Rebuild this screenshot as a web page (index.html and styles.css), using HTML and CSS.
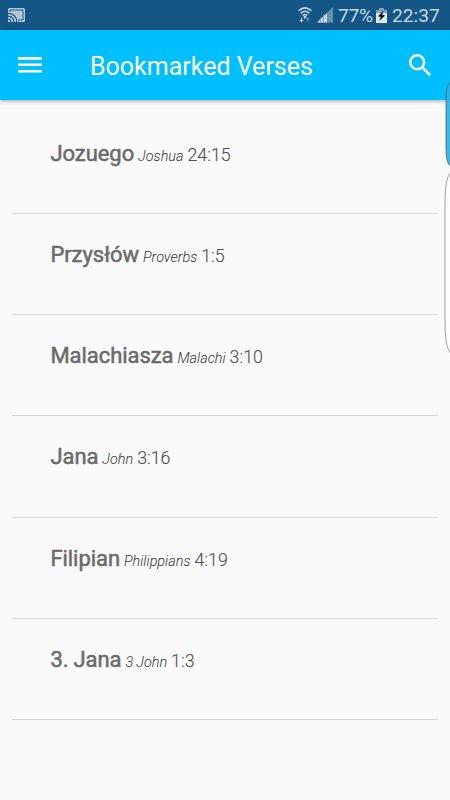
FILE: index.html
```html
<!DOCTYPE html>
<html lang="en">
<head>
<meta charset="utf-8">
<title>Bookmarked Verses</title>
<link rel="stylesheet" href="styles.css">
</head>
<body>
<div class="status">
  <svg class="cast" width="17" height="15" viewBox="0 0 17 15"><path d="M1.5 0h14Q17 0 17 1.5v11Q17 14 15.5 14H0V1.5Q0 0 1.5 0Z" fill="#b4c8d8"/><path d="M2 4V2h13v10h-5" fill="none" stroke="#175887" stroke-width="1"/><path d="M0 5.3Q8.5 5.6 8.8 14M0 8.2Q5.6 8.5 6 14M0 11Q2.7 11.2 3 14" fill="none" stroke="#175887" stroke-width="1.2"/></svg>
  <div class="status-right">
    <svg class="wifi" width="14" height="16" viewBox="0 0 14 16"><g fill="none" stroke="#c5d6e3" stroke-width="1.5"><path d="M.5 3.7Q7-2 13.5 3.7M2.6 6.2Q7 2.2 11.4 6.2M4.7 8.5Q7 6.5 9.3 8.5"/></g><path d="M7 8.5l1.8 1.5L7 12l-1.8-2Z" fill="#c5d6e3"/><path d="M4 10.500v2.500h1.500L3.500 15.500 1.500 13H3v-2.500Z" fill="#c5d6e3"/><path d="M9.500 15v-2.500H8l2-2.300 2 2.300h-1.500V15Z" fill="#6490b0"/></svg>
    <svg class="signal" width="16" height="16" viewBox="0 0 16 16"><path d="M0 15.500L16 0v15.500Z" fill="#6490b0"/><path d="M0 15.500L10 6v9.500Z" fill="#c5d6e3"/><path d="M3.500 10v6M6.500 7v9" stroke="#6490b0" stroke-width=".6"/></svg>
    <span class="percent">77%</span>
    <svg class="battery" width="11" height="15" viewBox="0 0 11 15"><path d="M3.500 0h4v2H11v13H0V2h3.500Z" fill="#dce7ee"/><path d="M0 2h3.500V0h4v2H11v3H0Z" fill="#7fa0b8"/><path d="M7.700 2.500L2 8.200l2.700.8-1.400 4L9 7.500 6.200 6.700Z" fill="#08111a"/></svg>
    <span class="clock">22:37</span>
  </div>
</div>
<header class="bar">
  <svg class="menu" width="24" height="16" viewBox="0 0 24 16"><path d="M0 1.400h24M0 7.700h24M0 14.200h24" stroke="#fff" stroke-width="2.600"/></svg>
  <h1>Bookmarked Verses</h1>
  <svg class="search" width="22" height="22" viewBox="3 3 17.490 17.490"><path fill="#fff" d="M15.500 14h-.790l-.280-.270A6.471 6.471 0 0 0 16 9.500 6.500 6.500 0 1 0 9.500 16c1.610 0 3.090-.590 4.230-1.570l.270.280v.790l5 4.990L20.490 19l-4.990-5zm-6 0C7.010 14 5 11.990 5 9.500S7.010 5 9.500 5 14 7.010 14 9.500 11.990 14 9.500 14z"/></svg>
</header>
<main class="list">
  <div class="row"><b>Jozuego</b> <i>Joshua</i> <span>24:15</span></div>
  <div class="row"><b>Przysłów</b> <i>Proverbs</i> <span>1:5</span></div>
  <div class="row"><b>Malachiasza</b> <i>Malachi</i> <span>3:10</span></div>
  <div class="row"><b>Jana</b> <i>John</i> <span>3:16</span></div>
  <div class="row"><b>Filipian</b> <i>Philippians</i> <span>4:19</span></div>
  <div class="row"><b>3. Jana</b> <i>3 John</i> <span>1:3</span></div>
</main>
<svg class="edge" width="8" height="280" viewBox="0 0 8 280"><path d="M9 1C4.500 2 2.800 9 2.800 20V67C2.800 79 4.500 86 9 87" transform="translate(1.200 0)" fill="#28b2e8" fill-opacity=".92" stroke="#49656f" stroke-width=".8"/><path d="M9 92C4 95 2.500 108 2.500 125V240C2.500 258 4 270 9 274" transform="translate(.5 0)" fill="#fefefe" stroke="#858585" stroke-width=".8"/></svg>
</body>
</html>
```
FILE: styles.css
```css
* { box-sizing: border-box; }
body {
  margin: 0;
  width: 450px;
  height: 800px;
  overflow: hidden;
  position: relative;
  background: #fafafa;
  font-family: Roboto, sans-serif;
}
svg { display: block; flex: none; }
.status {
  height: 30px;
  padding: 0 10px 0 8px;
  display: flex;
  align-items: center;
  justify-content: space-between;
  background: #145785;
  border-bottom: 1px solid #0d4f82;
  color: #c5d6e3;
}
.cast { margin-top: 1px; }
.status-right { display: flex; align-items: center; font-size: 19.2px; line-height: 30px; padding-top: 2px; }
.wifi, .signal, .battery { margin-top: -1px; margin-right: 5px; }
.percent { width: 35px; margin-right: 3px; letter-spacing: -0.3px; }
.clock { width: 48px; white-space: nowrap; }
.bar {
  height: 70px;
  padding: 0 19px 0 18px;
  display: flex;
  align-items: center;
  background: #00bfff;
  box-shadow: 0 1px 4px rgba(0, 0, 0, .35);
}
h1 {
  margin: 3px 0 0 48px;
  flex: 1;
  color: #fff;
  font-size: 25px;
  font-weight: 400;
  line-height: 30px;
}
.list { padding: 12.4px 12px 0; }
.row {
  height: 101.3px;
  padding: 26.2px 0 0 38.4px;
  border-bottom: 1px solid #d5d5d5;
  color: #505050;
  font-size: 17.8px;
  font-weight: 300;
  line-height: 30px;
  white-space: nowrap;
  word-spacing: -0.4px;
}
.row b {
  color: #6a6a6a;
  font-size: 22px;
  font-weight: 400;
  letter-spacing: -0.05px;
  -webkit-text-stroke: .5px #6a6a6a;
}
.row i { font-size: 14.4px; font-weight: 300; color: #333; }
.row span { -webkit-text-stroke: .15px #555; }
.edge { position: absolute; right: 0; top: 80px; }
```
